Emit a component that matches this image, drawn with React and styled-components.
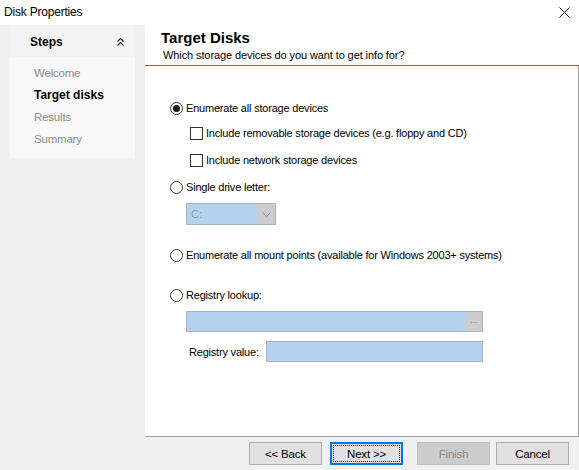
import styled, { createGlobalStyle } from 'styled-components';

const Global = createGlobalStyle`
html, body { margin:0; padding:0; background:#fff; }
body { font-family: "Liberation Sans", Arial, sans-serif; font-size:11px; color:#000; }
* { box-sizing:border-box; }
`

const Window = styled.div`
width:579px;
height:470px;
display:flex;
flex-direction:column;
background:#f0f0f0;
overflow:hidden;
`

const TitleBar = styled.div`
height:25px;
background:#fff;
display:flex;
align-items:center;
justify-content:space-between;
padding:0 5px 1px 4px;
font-size:12px;
letter-spacing:-0.2px;
`

const Close = styled.div`
width:20px;
height:20px;
display:flex;
align-items:center;
justify-content:center;
`

const Body = styled.div`
flex:1;
display:flex;
min-height:0;
`

const Sidebar = styled.div`
width:145px;
padding:0 10px;
`

const Card = styled.div`
background:#f8f8f8;
`

const CardHead = styled.div`
height:32px;
padding:2px 11px 0 20px;
background:#f3f3f3;
display:flex;
align-items:center;
justify-content:space-between;
font-weight:bold;
font-size:12px;
`

const StepList = styled.div`
padding:5px 0 8px 24px;
`

const Step = styled.div`
height:22px;
line-height:22px;
font-size:${p => p.$active ? '12px' : '11.5px'};
letter-spacing:${p => p.$active ? '0' : '-0.2px'};
color:${p => p.$active ? '#000' : '#8b8b8b'};
font-weight:${p => p.$active ? 'bold' : 'normal'};
`

const Main = styled.div`
flex:1;
display:flex;
flex-direction:column;
`

const Header = styled.div`
height:41px;
background:#fff;
border-bottom:1px solid #2b7bbd;
padding:4px 0 0 16px;
`

const Title = styled.div`
font-size:15px;
font-weight:bold;
line-height:18px;
`

const Subtitle = styled.div`
font-size:11px;
letter-spacing:-0.1px;
line-height:14px;
margin:1px 0 0 2px;
`

const Content = styled.div`
flex:1;
background:#fff;
border-right:1px solid #a0a0a0;
border-bottom:1px solid #a0a0a0;
padding:33px 0 0 25px;
display:flex;
flex-direction:column;
align-items:flex-start;
`

const Row = styled.label`
display:flex;
align-items:center;
height:18px;
margin-top:${p => p.$mt || 0}px;
margin-left:${p => p.$ml || 0}px;
font-size:11px;
letter-spacing:-0.2px;
white-space:nowrap;
`

const Radio = styled.span`
width:13px;
height:13px;
border-radius:50%;
border:1px solid #333;
background:#fff;
display:flex;
align-items:center;
justify-content:center;
margin-right:3px;
&::after {
  content:'';
  width:7px;
  height:7px;
  border-radius:50%;
  background:${p => p.$checked ? '#1a1a1a' : 'transparent'};
}
`

const Check = styled.span`
width:13px;
height:13px;
border:1px solid #333;
background:#fff;
margin-right:3px;
`

const Combo = styled.div`
display:flex;
width:90px;
height:22px;
margin:7px 0 0 16px;
border:1px solid #a8b4c0;
background:#b4d1ef;
`

const ComboText = styled.div`
flex:1;
color:#8d9db0;
font-size:11px;
line-height:20px;
padding-left:4px;
`

const ComboArrow = styled.div`
width:17px;
background:#cccccc;
display:flex;
align-items:center;
justify-content:center;
`

const Field = styled.div`
display:flex;
width:${p => p.$w}px;
height:21px;
border:1px solid #a8b4c0;
background:#b4d1ef;
justify-content:flex-end;
`

const Dots = styled.div`
width:16px;
background:#cccccc;
color:#888;
font-size:9px;
text-align:center;
line-height:16px;
`

const FieldWrap = styled.div`
margin:${p => p.$mt}px 0 0 16px;
display:flex;
align-items:center;
`

const FieldLabel = styled.span`
font-size:11px;
letter-spacing:-0.2px;
white-space:nowrap;
width:80px;
padding-left:3px;
`

const Footer = styled.div`
height:33px;
display:flex;
justify-content:flex-end;
align-items:flex-start;
padding:5px 10px 0 0;
`

const Button = styled.button`
width:73px;
height:23px;
margin-left:${p => p.$ml || 0}px;
font-family:inherit;
font-size:11.5px;
letter-spacing:-0.2px;
color:${p => p.$disabled ? '#8a8a8a' : '#000'};
background:${p => p.$disabled ? '#cccccc' : '#e1e1e1'};
border:${p => p.$focus ? '2px solid #0078d7' : p.$disabled ? '1px solid #bfbfbf' : '1px solid #adadad'};
padding:0;
position:relative;
&::after {
  content:'';
  display:${p => p.$focus ? 'block' : 'none'};
  position:absolute;
  inset:1px;
  border:1px dotted #222;
}
`

const App = () => {
  return (
    <Window>
      <Global />
      <TitleBar>
        <span>Disk Properties</span>
        <Close>
          <svg width="11" height="11" viewBox="0 0 11 11">
            <path d="M0.5 0.5 L10.5 10.5 M10.5 0.5 L0.5 10.5" stroke="#111" strokeWidth="1" />
          </svg>
        </Close>
      </TitleBar>
      <Body>
        <Sidebar>
          <Card>
            <CardHead>
              <span>Steps</span>
              <svg width="7" height="8" viewBox="0 0 7 8">
                <path d="M0.5 3.5 L3.5 0.5 L6.5 3.5 M0.5 7.5 L3.5 4.5 L6.5 7.5" stroke="#222" strokeWidth="1.2" fill="none" />
              </svg>
            </CardHead>
            <StepList>
              <Step>Welcome</Step>
              <Step $active>Target disks</Step>
              <Step>Results</Step>
              <Step>Summary</Step>
            </StepList>
          </Card>
        </Sidebar>
        <Main>
          <Header>
            <Title>Target Disks</Title>
            <Subtitle>Which storage devices do you want to get info for?</Subtitle>
          </Header>
          <Content>
            <Row><Radio $checked />Enumerate all storage devices</Row>
            <Row $mt={7} $ml={20}><Check />Include removable storage devices (e.g. floppy and CD)</Row>
            <Row $mt={9} $ml={20}><Check />Include network storage devices</Row>
            <Row $mt={9}><Radio />Single drive letter:</Row>
            <Combo>
              <ComboText>C:</ComboText>
              <ComboArrow>
                <svg width="9" height="5" viewBox="0 0 9 5">
                  <path d="M0.5 0.5 L4.5 4.5 L8.5 0.5" stroke="#999" fill="none" />
                </svg>
              </ComboArrow>
            </Combo>
            <Row $mt={21}><Radio />Enumerate all mount points (available for Windows 2003+ systems)</Row>
            <Row $mt={22}><Radio />Registry lookup:</Row>
            <FieldWrap $mt={7}>
              <Field $w={297}><Dots>...</Dots></Field>
            </FieldWrap>
            <FieldWrap $mt={9}>
              <FieldLabel>Registry value:</FieldLabel>
              <Field $w={217} />
            </FieldWrap>
          </Content>
        </Main>
      </Body>
      <Footer>
        <Button>&lt;&lt; Back</Button>
        <Button $focus $ml={8}>Next &gt;&gt;</Button>
        <Button $disabled $ml={14}>Finish</Button>
        <Button $ml={6}>Cancel</Button>
      </Footer>
    </Window>
  )
}

export default App
